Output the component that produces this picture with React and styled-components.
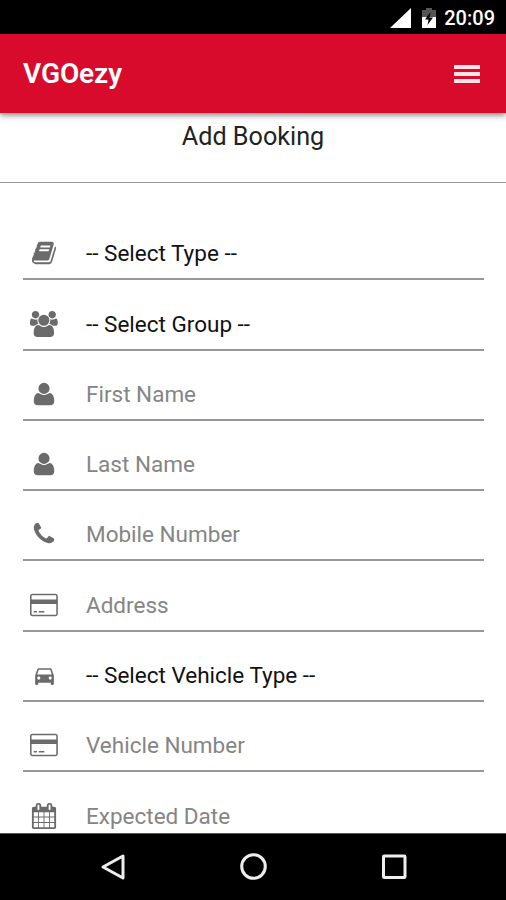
import React from 'react';
import styled, { createGlobalStyle } from 'styled-components';
import { MdDirectionsCar } from 'react-icons/md';

const GlobalStyle = createGlobalStyle`
  * {
    box-sizing: border-box;
  }

  body {
    margin: 0;
    background: #fff;
    font-family: Roboto, 'Liberation Sans', sans-serif;
  }
`;

const icons = {
  book: {
    width: 1792,
    path: 'M1703 478q40 57 18 129l-275 906q-19 64-76.5 107.5t-122.5 43.5h-923q-77 0-148.5-53.5t-99.5-131.5q-24-67-2-127 0-4 3-27t4-37q1-8-3-21.5t-3-19.5q2-11 8-21t16.5-23.5 16.5-23.5q23-38 45-91.5t30-91.5q3-10 .5-30t-.5-28q3-11 17-28t17-23q21-36 42-92t25-90q1-9-2.5-32t.5-28q4-13 22-30.5t22-22.5q19-26 42.5-84.5t27.5-96.5q1-8-3-25.5t-2-26.5q2-8 9-18t18-23 17-21q8-12 16.5-30.5t15-35 16-36 19.5-32 26.5-23.5 36-11.5 47.5 5.5l-1 3q38-9 51-9h761q74 0 114 56t18 130l-274 906q-36 119-71.5 153.5t-128.5 34.5h-869q-27 0-38 15-11 16-1 43 24 70 144 70h923q29 0 56-15.5t35-41.5l300-987q7-22 5-57 38 15 59 43zm-1064 2q-4 13 2 22.5t20 9.5h608q13 0 25.5-9.5t16.5-22.5l21-64q4-13-2-22.5t-20-9.5h-608q-13 0-25.5 9.5t-16.5 22.5zm-83 256q-4 13 2 22.5t20 9.5h608q13 0 25.5-9.5t16.5-22.5l21-64q4-13-2-22.5t-20-9.5h-608q-13 0-25.5 9.5t-16.5 22.5z',
  },
  users: {
    width: 2048,
    path: 'M657 896q-162 5-265 128h-134q-82 0-138-40.5t-56-118.5q0-353 124-353 6 0 43.5 21t97.5 42.5 119 21.5q67 0 133-23-5 37-5 66 0 139 81 256zm1071 637q0 120-73 189.5t-194 69.5h-874q-121 0-194-69.5t-73-189.5q0-53 3.5-103.5t14-109 26.5-108.5 43-97.5 62-81 85.5-53.5 111.5-20q10 0 43 21.5t73 48 107 48 135 21.5 135-21.5 107-48 73-48 43-21.5q61 0 111.5 20t85.5 53.5 62 81 43 97.5 26.5 108.5 14 109 3.5 103.5zm-1024-1277q0 106-75 181t-181 75-181-75-75-181 75-181 181-75 181 75 75 181zm704 384q0 159-112.5 271.5t-271.5 112.5-271.5-112.5-112.5-271.5 112.5-271.5 271.5-112.5 271.5 112.5 112.5 271.5zm576 225q0 78-56 118.5t-138 40.5h-134q-103-123-265-128 81-117 81-256 0-29-5-66 66 23 133 23 59 0 119-21.5t97.5-42.5 43.5-21q124 0 124 353zm-128-609q0 106-75 181t-181 75-181-75-75-181 75-181 181-75 181 75 75 181z',
  },
  user: {
    width: 1792,
    path: 'M1600 1405q0 120-73 189.5t-194 69.5h-874q-121 0-194-69.5t-73-189.5q0-53 3.5-103.5t14-109 26.5-108.5 43-97.5 62-81 85.5-53.5 111.5-20q9 0 42 21.5t74.5 48 108 48 133.500 21.5 133.5-21.5 108-48 74.5-48 42-21.5q61 0 111.500 20t85.500 53.5 62 81 43 97.5 26.500 108.500 14 109 3.500 103.500zm-320-893q0 159-112.5 271.5t-271.5 112.5-271.5-112.5-112.500-271.500 112.500-271.500 271.500-112.500 271.500 112.500 112.500 271.500z',
  },
  phone: {
    width: 1792,
    path: 'M1600 1240q0 27-10 70.5t-21 68.5q-21 50-122 106-94 51-186 51-27 0-53-3.5t-57.5-12.5-47-14.5-55.5-20.5-49-18q-98-35-175-83-127-79-264-216t-216-264q-48-77-83-175-3-9-18-49t-20.5-55.5-14.5-47-12.5-57.5-3.5-53q0-92 51-186 56-101 106-122 25-11 68.5-21t70.5-10q14 0 21 3 18 6 53 76 11 19 30 54t35 63.5 31 53.5q3 4 17.5 25t21.5 35.5 7 28.5q0 20-28.5 50t-62 55-62 53-28.5 46q0 9 5 22.5t8.5 20.5 14 24 11.5 19q76 137 174 235t235 174q2 1 19 11.5t24 14 20.5 8.5 22.5 5q18 0 46-28.5t53-62 55-62 50-28.5q14 0 28.5 7t35.5 21.5 25 17.5q25 15 53.5 31t63.5 35 54 30q70 35 76 53 3 7 3 21z',
  },
  card: {
    width: 1920,
    path: 'M1760 128q66 0 113 47t47 113v1216q0 66-47 113t-113 47h-1600q-66 0-113-47t-47-113v-1216q0-66 47-113t113-47h1600zm-1600 100q-13 0-32.500 19.500t-19.500 32.500v244h1704v-244q0-13-19.500-32.500t-32.500-19.500h-1600zm1600 1336q13 0 32.500-19.500t19.500-32.500v-688h-1704v688q0 13 19.500 32.500t32.500 19.500h1600zm-1504-156v-100h220v100h-220zm350 0v-100h384v100h-384z',
  },
  calendar: {
    width: 1792,
    path: 'M192 1664h288v-288h-288v288zm352 0h320v-288h-320v288zm-352-352h288v-320h-288v320zm352 0h320v-320h-320v320zm-352-384h288v-288h-288v288zm736 736h320v-288h-320v288zm-384-736h320v-288h-320v288zm768 736h288v-288h-288v288zm-384-352h320v-320h-320v320zm-352-864v-288q0-13-9.5-22.5t-22.5-9.5h-64q-13 0-22.5 9.5t-9.5 22.5v288q0 13 9.5 22.5t22.5 9.5h64q13 0 22.5-9.5t9.5-22.5zm736 864h288v-320h-288v320zm-384-384h320v-288h-320v288zm384 0h288v-288h-288v288zm32-480v-288q0-13-9.5-22.5t-22.5-9.5h-64q-13 0-22.5 9.5t-9.5 22.5v288q0 13 9.5 22.5t22.5 9.5h64q13 0 22.5-9.5t9.5-22.5zm384-64v1280q0 52-38 90t-90 38h-1408q-52 0-90-38t-38-90v-1280q0-52 38-90t90-38h128v-96q0-66 47-113t113-47h64q66 0 113 47t47 113v96h384v-96q0-66 47-113t113-47h64q66 0 113 47t47 113v96h128q52 0 90 38t38 90z',
  },
};

const fields = [
  { icon: 'book', label: '-- Select Type --', select: true },
  { icon: 'users', label: '-- Select Group --', select: true },
  { icon: 'user', label: 'First Name' },
  { icon: 'user', label: 'Last Name' },
  { icon: 'phone', label: 'Mobile Number' },
  { icon: 'card', label: 'Address' },
  { icon: 'car', label: '-- Select Vehicle Type --', select: true },
  { icon: 'card', label: 'Vehicle Number' },
  { icon: 'calendar', label: 'Expected Date' },
];

const FieldIcon = ({ name }) => {
  if (name === 'car') {
    return <MdDirectionsCar size={25} />;
  }

  const { width, path } = icons[name];

  return (
    <svg width={(width / 1792) * 26} height="26" viewBox={`0 0 ${width} 1792`} fill="currentColor">
      <path d={path} />
    </svg>
  );
};

const App = () => {
  return (
    <Screen>
      <GlobalStyle />
      <StatusBar>
        <svg width="21" height="20" viewBox="0 0 21 20">
          <path d="M0 20L21 0v20z" fill="#fff" />
        </svg>
        <svg width="14" height="20" viewBox="0 0 14 20">
          <path d="M4 0h6v2h4v7H0V2h4z" fill="#555" />
          <path d="M0 9h14v11H0z" fill="#fff" />
          <path d="M8.500 4L3 11.500h3.500L5.500 17 11 9.500H7.500z" fill="#000" />
        </svg>
        <Clock>20:09</Clock>
      </StatusBar>
      <AppBar>
        <Brand>VGOezy</Brand>
        <MenuButton aria-label="Menu">
          <Bar />
          <Bar />
          <Bar />
        </MenuButton>
      </AppBar>
      <Content>
        <Title>Add Booking</Title>
        <Form>
          {fields.map(({ icon, label, select }) => (
            <Field key={label}>
              <IconSlot>
                <FieldIcon name={icon} />
              </IconSlot>
              <Label $select={select}>{label}</Label>
            </Field>
          ))}
        </Form>
      </Content>
      <NavBar>
        <svg width="26" height="28" viewBox="0 0 26 28" fill="none" stroke="#eee" strokeWidth="3">
          <path d="M23 3v22L3 14z" strokeLinejoin="round" />
        </svg>
        <svg width="28" height="28" viewBox="0 0 28 28" fill="none" stroke="#eee" strokeWidth="3">
          <circle cx="13.500" cy="13.500" r="11.800" />
        </svg>
        <svg width="26" height="28" viewBox="0 0 26 28" fill="none" stroke="#eee" strokeWidth="3">
          <rect x="2.500" y="3" width="21.500" height="21.500" rx="0.800" />
        </svg>
      </NavBar>
    </Screen>
  );
};

export default App;

const Screen = styled.div`
  display: flex;
  flex-direction: column;
  width: 506px;
  height: 900px;
  overflow: hidden;
`;

const StatusBar = styled.div`
  display: flex;
  flex: none;
  align-items: center;
  justify-content: flex-end;
  gap: 11px;
  height: 34px;
  padding: 2px 11px 0 0;
  background: #000;
`;

const Clock = styled.span`
  margin-left: -3px;
  color: #fff;
  font-size: 20px;
  font-weight: 500;
  line-height: 24px;
`;

const AppBar = styled.header`
  display: flex;
  flex: none;
  align-items: center;
  justify-content: space-between;
  height: 79px;
  padding: 0 26px 0 23px;
  background: #d90b2d;
  box-shadow: 0 2px 6px rgba(0, 0, 0, 0.5);
  z-index: 1;
`;

const Brand = styled.h1`
  margin: 0;
  color: #fff;
  font-size: 28px;
  font-weight: 600;
  letter-spacing: -0.1px;
  line-height: 34px;
`;

const MenuButton = styled.button`
  display: flex;
  flex-direction: column;
  gap: 3px;
  width: 26px;
  padding: 0;
  border: 0;
  background: none;
`;

const Bar = styled.span`
  height: 4px;
  background: #fbe3e6;
`;

const Content = styled.main`
  flex: 1;
  min-height: 0;
  overflow: hidden;
`;

const Title = styled.h2`
  height: 70px;
  margin: 0;
  padding-top: 8px;
  border-bottom: 1.5px solid #999;
  color: #222;
  font-size: 25.2px;
  font-weight: 400;
  line-height: 32px;
  text-align: center;
`;

const Form = styled.form`
  padding: 27px 22px 0 23px;
`;

const Field = styled.div`
  display: flex;
  align-items: flex-end;
  height: 70.3px;
  border-bottom: 2px solid #979797;
`;

const IconSlot = styled.span`
  display: flex;
  flex: none;
  align-items: center;
  justify-content: center;
  width: 42px;
  height: 50px;
  color: #6b6b6b;
`;

const Label = styled.span`
  margin-left: 21px;
  color: ${({ $select }) => ($select ? '#111' : '#858585')};
  font-size: 22.5px;
  line-height: 50px;
  white-space: nowrap;
`;

const NavBar = styled.nav`
  display: flex;
  flex: none;
  align-items: center;
  justify-content: space-between;
  height: 67px;
  padding: 0 99px 0 100px;
  border-top: 1px solid #555;
  background: #000;
`;
